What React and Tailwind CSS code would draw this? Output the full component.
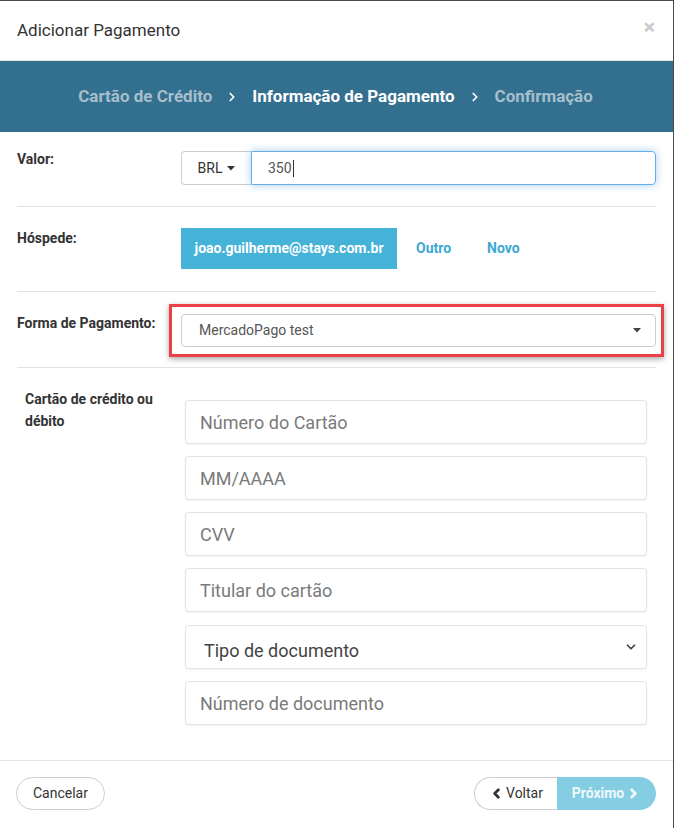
import { ChevronLeft, ChevronRight, ChevronDown } from "lucide-react";

function Caret({ className = "" }) {
  return (
    <svg width="8" height="5" viewBox="0 0 8 5" className={className}>
      <path d="M0 0 L8 0 L4 4.5 Z" fill="currentColor" />
    </svg>
  );
}

function CardInput({ placeholder }) {
  return (
    <input
      type="text"
      placeholder={placeholder}
      className="h-[44px] w-full rounded-[4px] border border-[#e3e3e3] bg-white px-[14px] text-[18px] text-[#555] shadow-[0_1px_2px_rgba(0,0,0,0.06)] outline-none placeholder:text-[#7a7a7a]"
    />
  );
}

export default function App() {
  return (
    <div
      className="flex h-[828px] w-[674px] flex-col overflow-hidden border-t border-r border-[#4a4a4a] bg-white text-[#333]"
      style={{ fontFamily: "Roboto, 'Liberation Sans', sans-serif" }}
    >
      {/* header */}
      <div className="flex h-[60px] items-center justify-between border-b border-[#e5e5e5] pl-[17px] pr-[17px]">
        <h4 className="text-[17px] text-[#333]">Adicionar Pagamento</h4>
        <button className="mb-[6px] mr-[1px] text-[21px] font-bold leading-none text-[#c8c8c8]">×</button>
      </div>

      {/* steps */}
      <div className="flex h-[71px] items-center justify-center gap-[13px] bg-[#336f8e] pr-[2px] text-[17px] font-bold">
        <span className="text-[#a6bfcd]">Cartão de Crédito</span>
        <ChevronRight size={14} strokeWidth={3} className="text-white" />
        <span className="text-white">Informação de Pagamento</span>
        <ChevronRight size={14} strokeWidth={3} className="text-white" />
        <span className="text-[#a6bfcd]">Confirmação</span>
      </div>

      {/* body */}
      <div className="flex flex-1 flex-col pl-[17px] pr-[17px]">
        {/* valor */}
        <div className="flex border-b border-[#e2e2e2] pt-[19px] pb-[21px]">
          <label className="w-[164px] pt-[1px] text-[14px] font-bold leading-[14px] text-[#333]">Valor:</label>
          <div className="flex flex-1">
            <button className="flex h-[34px] w-[70px] items-center justify-center gap-[5px] rounded-l-[4px] border border-r-0 border-[#ccc] bg-white text-[14px] text-[#333]">
              BRL <Caret className="text-[#333]" />
            </button>
            <div className="flex h-[34px] flex-1 items-center rounded-r-[4px] border border-[#66afe9] px-[16px] text-[14px] text-[#555] shadow-[0_0_8px_rgba(102,175,233,0.6)]">
              350<span className="ml-[1px] h-[17px] w-px bg-[#333]" />
            </div>
          </div>
        </div>

        {/* hospede */}
        <div className="flex border-b border-[#e2e2e2] pt-[21px] pb-[22px]">
          <label className="w-[164px] pt-[3px] text-[14px] font-bold leading-[14px] text-[#333]">Hóspede:</label>
          <div className="flex items-center">
            <button className="h-[41px] w-[216px] bg-[#45b3d8] text-[14px] font-bold text-white">
              joao.guilherme@stays.com.br
            </button>
            <span className="ml-[19px] text-[14px] font-bold text-[#3ca8d3]">Outro</span>
            <span className="ml-[36px] text-[14px] font-bold text-[#3ca8d3]">Novo</span>
          </div>
        </div>

        {/* forma de pagamento */}
        <div className="flex border-b border-[#e2e2e2] pt-[22px] pb-[20px]">
          <label className="w-[164px] pt-[2px] text-[14px] font-bold leading-[14px] text-[#333]">Forma de Pagamento:</label>
          <div className="-mt-[10px] -mb-[10px] -ml-[12px] -mr-[8px] flex-1 border-[3px] border-[#ec4047] pt-[7px] pb-[7px] pl-[9px] pr-[5px] shadow-[0_2px_6px_rgba(0,0,0,0.35)]">
            <div className="flex h-[33px] items-center justify-between rounded-[4px] border border-[#ccc] pl-[17px] pr-[14px] text-[14px] text-[#555]">
              <span>MercadoPago test</span>
              <Caret className="text-[#444]" />
            </div>
          </div>
        </div>

        {/* card */}
        <div className="flex pt-[20px] pl-[8px] pr-[9px]">
          <label className="w-[160px] text-[14px] font-bold leading-[22px] text-[#333]">
            Cartão de crédito ou
            <br />
            débito
          </label>
          <div className="flex flex-1 flex-col gap-[12px] pt-[12px]">
            <CardInput placeholder="Número do Cartão" />
            <CardInput placeholder="MM/AAAA" />
            <CardInput placeholder="CVV" />
            <CardInput placeholder="Titular do cartão" />
            <div className="mt-[1px] flex h-[44px] w-full items-center justify-between rounded-[4px] border border-[#e3e3e3] pl-[18px] pr-[8px] text-[18px] text-[#444] shadow-[0_1px_2px_rgba(0,0,0,0.06)]">
              <span className="pt-[6px]">Tipo de documento</span>
              <ChevronDown size={14} strokeWidth={3} className="text-[#444]" />
            </div>
            <CardInput placeholder="Número de documento" />
          </div>
        </div>
      </div>

      {/* footer */}
      <div className="flex h-[68px] items-start justify-between border-t border-[#e5e5e5] pt-[16px] pl-[16px] pr-[17px]">
        <button className="h-[33px] w-[89px] rounded-full border border-[#ccc] bg-white text-[14px] text-[#333]">
          Cancelar
        </button>
        <div className="flex">
          <button className="flex h-[33px] w-[83px] items-center justify-center gap-[2px] rounded-l-full border border-r-0 border-[#ccc] bg-white text-[14px] text-[#333]">
            <ChevronLeft size={15} strokeWidth={4.5} /> Voltar
          </button>
          <button className="flex h-[33px] w-[99px] items-center justify-center gap-[2px] rounded-r-full bg-[#84cde3] text-[14px] font-bold text-[#eef8fb]">
            Próximo <ChevronRight size={15} strokeWidth={4.5} />
          </button>
        </div>
      </div>
    </div>
  );
}
